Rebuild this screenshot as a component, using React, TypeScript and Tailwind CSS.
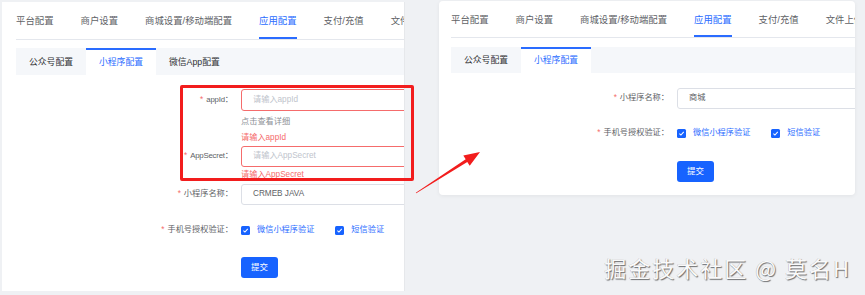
import React from 'react';

const font = { fontFamily: '"Liberation Sans", "Noto Sans CJK SC", sans-serif' };

const mainTabs = ['平台配置', '商户设置', '商城设置/移动端配置', '应用配置', '支付/充值', '文件上传'];

function MainTabs({ h }: { h: 'left' | 'right' }) {
  return (
    <div
      className={
        h === 'left'
          ? 'ml-[14px] flex h-[38px] gap-[27px] whitespace-nowrap border-b border-[#e4e7ed]'
          : 'ml-[12px] flex h-[37px] gap-[27px] whitespace-nowrap border-b border-[#e4e7ed]'
      }
    >
      {mainTabs.map((t) => (
        <div
          key={t}
          className={
            t === '应用配置'
              ? 'flex items-center border-b-2 border-[#2a6cff] pt-[4px] text-[9.4px] text-[#2a6cff]'
              : 'flex items-center border-b-2 border-transparent pt-[4px] text-[9.4px] text-[#606266]'
          }
        >
          {t}
        </div>
      ))}
    </div>
  );
}

function SubTabs({ items, h }: { items: string[]; h: 'left' | 'right' }) {
  return (
    <div
      className={
        h === 'left'
          ? 'ml-[14px] mt-[8px] flex h-[27px] whitespace-nowrap bg-[#f5f7fa]'
          : 'ml-[12px] mt-[9px] flex h-[26px] whitespace-nowrap bg-[#f5f7fa]'
      }
    >
      {items.map((t) => (
        <div
          key={t}
          className={
            t === '小程序配置'
              ? 'flex items-center border-t-2 border-[#2a6cff] bg-white px-[13px] text-[8.8px] text-[#2a6cff]'
              : 'flex items-center border-t-2 border-transparent px-[13px] text-[8.8px] text-[#303133]'
          }
        >
          {t}
        </div>
      ))}
    </div>
  );
}

function Label({ text, w, latin }: { text: string; w: string; latin?: boolean }) {
  return (
    <div className={`${w} shrink-0 whitespace-nowrap pr-[4px] text-right text-[8.2px] text-[#606266]`}>
      <span className="mr-[3px] text-[#f56c6c]">*</span>
      <span className={latin ? 'text-[7.8px] tracking-[-0.2px]' : ''}>{text}</span>：
    </div>
  );
}

function Input({ placeholder, value, error, h }: { placeholder?: string; value?: string; error?: boolean; h: string }) {
  return (
    <div
      className={`${h} flex w-[320px] shrink-0 items-center rounded-[3px] border pl-[11px] text-[8.2px] ${
        error ? 'border-[#f56c6c]' : 'border-[#dcdfe6]'
      } ${value ? 'text-[#606266]' : 'text-[#c0c4cc]'}`}
    >
      {value ?? placeholder}
    </div>
  );
}

function Check({ label }: { label: string }) {
  return (
    <div className="flex items-center">
      <span className="flex h-[9px] w-[9px] items-center justify-center rounded-[1.5px] bg-[#1763ff]">
        <svg width="7" height="7" viewBox="0 0 10 10">
          <path d="M2 5.2 L4.2 7.3 L8.2 2.8" fill="none" stroke="white" strokeWidth="1.5" />
        </svg>
      </span>
      <span className="ml-[7px] text-[8.2px] text-[#2a6cff]">{label}</span>
    </div>
  );
}

function CheckRow({ w, mt }: { w: string; mt: string }) {
  return (
    <div className={`${mt} flex h-[12px] items-center`}>
      <Label text="手机号授权验证" w={w} />
      <div className="ml-[4px] flex gap-[21px]">
        <Check label="微信小程序验证" />
        <Check label="短信验证" />
      </div>
    </div>
  );
}

function Submit({ pl, mt }: { pl: string; mt: string }) {
  return (
    <div className={`${pl} ${mt}`}>
      <button className="flex h-[21px] w-[37px] items-center justify-center rounded-[3px] bg-[#1763ff] text-[8.5px] text-white">
        提交
      </button>
    </div>
  );
}

export default function App() {
  return (
    <div className="relative flex h-[295px] w-[865px] items-start overflow-hidden bg-[#eff1f4]" style={font}>
      {/* 左：修改前 */}
      <div className="ml-[2px] mt-[2px] h-[289px] w-[403px] shrink-0 overflow-hidden border-r border-[#e6e8eb] bg-white">
        <MainTabs h="left" />
        <SubTabs h="left" items={['公众号配置', '小程序配置', '微信App配置']} />

        <div className="mt-[14px] flex items-center">
          <Label text="appId" w="w-[235px]" latin />
          <div className="ml-[4px]">
            <Input h="h-[22px]" placeholder="请输入appId" error />
          </div>
        </div>
        <div className="ml-[239px] mt-[5px] text-[8.2px] leading-[12px] text-[#8c8f96]">点击查看详细</div>
        <div className="ml-[239px] mt-[4px] text-[8.2px] leading-[12px] text-[#f56c6c]">请输入appId</div>
        <div className="mt-[2px] flex items-center">
          <Label text="AppSecret" w="w-[235px]" latin />
          <div className="ml-[4px]">
            <Input h="h-[21px]" placeholder="请输入AppSecret" error />
          </div>
        </div>
        <div className="ml-[239px] mt-[2px] text-[8.2px] leading-[12px] text-[#f56c6c]">请输入AppSecret</div>
        <div className="mt-[3px] flex items-center">
          <Label text="小程序名称" w="w-[235px]" />
          <div className="ml-[4px]">
            <Input h="h-[21px]" value="CRMEB JAVA" />
          </div>
        </div>
        <CheckRow w="w-[235px]" mt="mt-[19px]" />
        <Submit pl="pl-[239px]" mt="mt-[21px]" />
      </div>

      {/* 右：修改后 */}
      <div className="ml-[34px] mt-[1px] h-[194px] w-[416px] shrink-0 overflow-hidden rounded-[4px] bg-white shadow-[0_1px_4px_rgba(0,0,0,0.06)]">
        <MainTabs h="right" />
        <SubTabs h="right" items={['公众号配置', '小程序配置']} />
        <div className="mt-[15px] flex items-center">
          <Label text="小程序名称" w="w-[234px]" />
          <div className="ml-[4px]">
            <Input h="h-[21px]" value="商城" />
          </div>
        </div>
        <CheckRow w="w-[234px]" mt="mt-[18px]" />
        <Submit pl="pl-[238px]" mt="mt-[22px]" />
      </div>

      {/* 标注框 */}
      <div className="absolute left-[180px] top-[85px] h-[96px] w-[234px] rounded-[2px] border-[3px] border-[#f21d1d]" />

      {/* 箭头 */}
      <svg className="pointer-events-none absolute left-0 top-0" width="865" height="295">
        <polygon
          points="415.8,192.7 465.7,159.3 463.3,155.5 480,152 469.7,165.7 467.3,161.9 416.2,193.3"
          fill="#f21d1d"
        />
      </svg>

      {/* 水印 */}
      <div
        className="absolute right-[14px] top-[254px] whitespace-nowrap text-[22px] leading-[26px] tracking-[2px] text-[#fafafa]"
        style={{
          fontFamily: '"Noto Sans CJK SC", sans-serif',
          textShadow: '1px 1px 1px rgba(0,0,0,0.55), -0.5px -0.5px 0 rgba(0,0,0,0.25)',
        }}
      >
        掘金技术社区<span className="mx-[7px]">@</span>莫名H
      </div>
    </div>
  );
}
